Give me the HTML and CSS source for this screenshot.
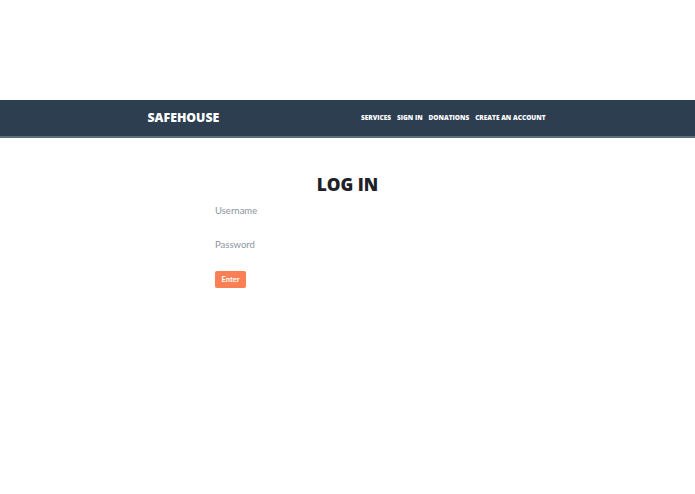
FILE: index.html
```html
<!DOCTYPE html>
<html>
<head>
<meta charset="utf-8">
<link rel="stylesheet" href="styles.css">
</head>
<body>
<div class="spacer"></div>
<nav class="navbar">
  <div class="nav-inner">
    <a class="brand" href="#">SAFEHOUSE</a>
    <ul class="links">
      <li><a href="#">Services</a></li>
      <li><a href="#">Sign In</a></li>
      <li><a href="#">Donations</a></li>
      <li><a href="#">Create an Account</a></li>
    </ul>
  </div>
</nav>
<main class="content">
  <h1 class="title">LOG IN</h1>
  <form class="form">
    <label class="field">Username</label>
    <label class="field">Password</label>
    <button class="btn" type="button">Enter</button>
  </form>
</main>
</body>
</html>
```
FILE: styles.css
```css
html, body {
  margin: 0;
  padding: 0;
  background: #fff;
  font-family: Lato, "Open Sans", sans-serif;
}
.spacer {
  height: 100px;
}
.navbar {
  background: #2c3e50;
  height: 36px;
  border-bottom: 2px solid #5f6e7c;
}
.nav-inner {
  width: 400px;
  margin: 0 auto;
  padding-right: 2px;
  box-sizing: border-box;
  height: 100%;
  display: flex;
  align-items: center;
  justify-content: space-between;
}
.brand {
  color: #fff;
  text-decoration: none;
  font-family: "Open Sans", sans-serif;
  font-weight: 800;
  font-size: 12.3px;
  line-height: 16px;
}
.links {
  list-style: none;
  margin: 0;
  padding: 0;
  display: flex;
  align-items: center;
  gap: 6px;
  font-size: 6.5px;
  line-height: 10px;
}
.links li {
  display: block;
  line-height: 10px;
}
.links a {
  display: block;
  color: #fff;
  text-decoration: none;
  text-transform: uppercase;
  font-family: "Open Sans", sans-serif;
  font-weight: 800;
  font-size: 6.5px;
  line-height: 10px;
  letter-spacing: 0;
}
.content {
  width: 265px;
  margin: 0 auto;
  padding-top: 35px;
}
.title {
  margin: 0;
  text-align: center;
  font-family: "Open Sans", sans-serif;
  font-weight: 800;
  font-size: 17.3px;
  line-height: 24px;
  color: #1e2228;
}
.form {
  display: flex;
  flex-direction: column;
  align-items: flex-start;
  padding-top: 8px;
}
.field {
  font-size: 9.5px;
  color: #8a949e;
  line-height: 12px;
  margin-bottom: 22px;
}
.btn {
  margin-top: -2px;
  background: #fa7f54;
  color: #fff;
  border: none;
  border-radius: 2px;
  font-family: Lato, sans-serif;
  font-weight: 700;
  font-size: 7.5px;
  width: 31px;
  height: 17px;
  padding: 0;
}
```
